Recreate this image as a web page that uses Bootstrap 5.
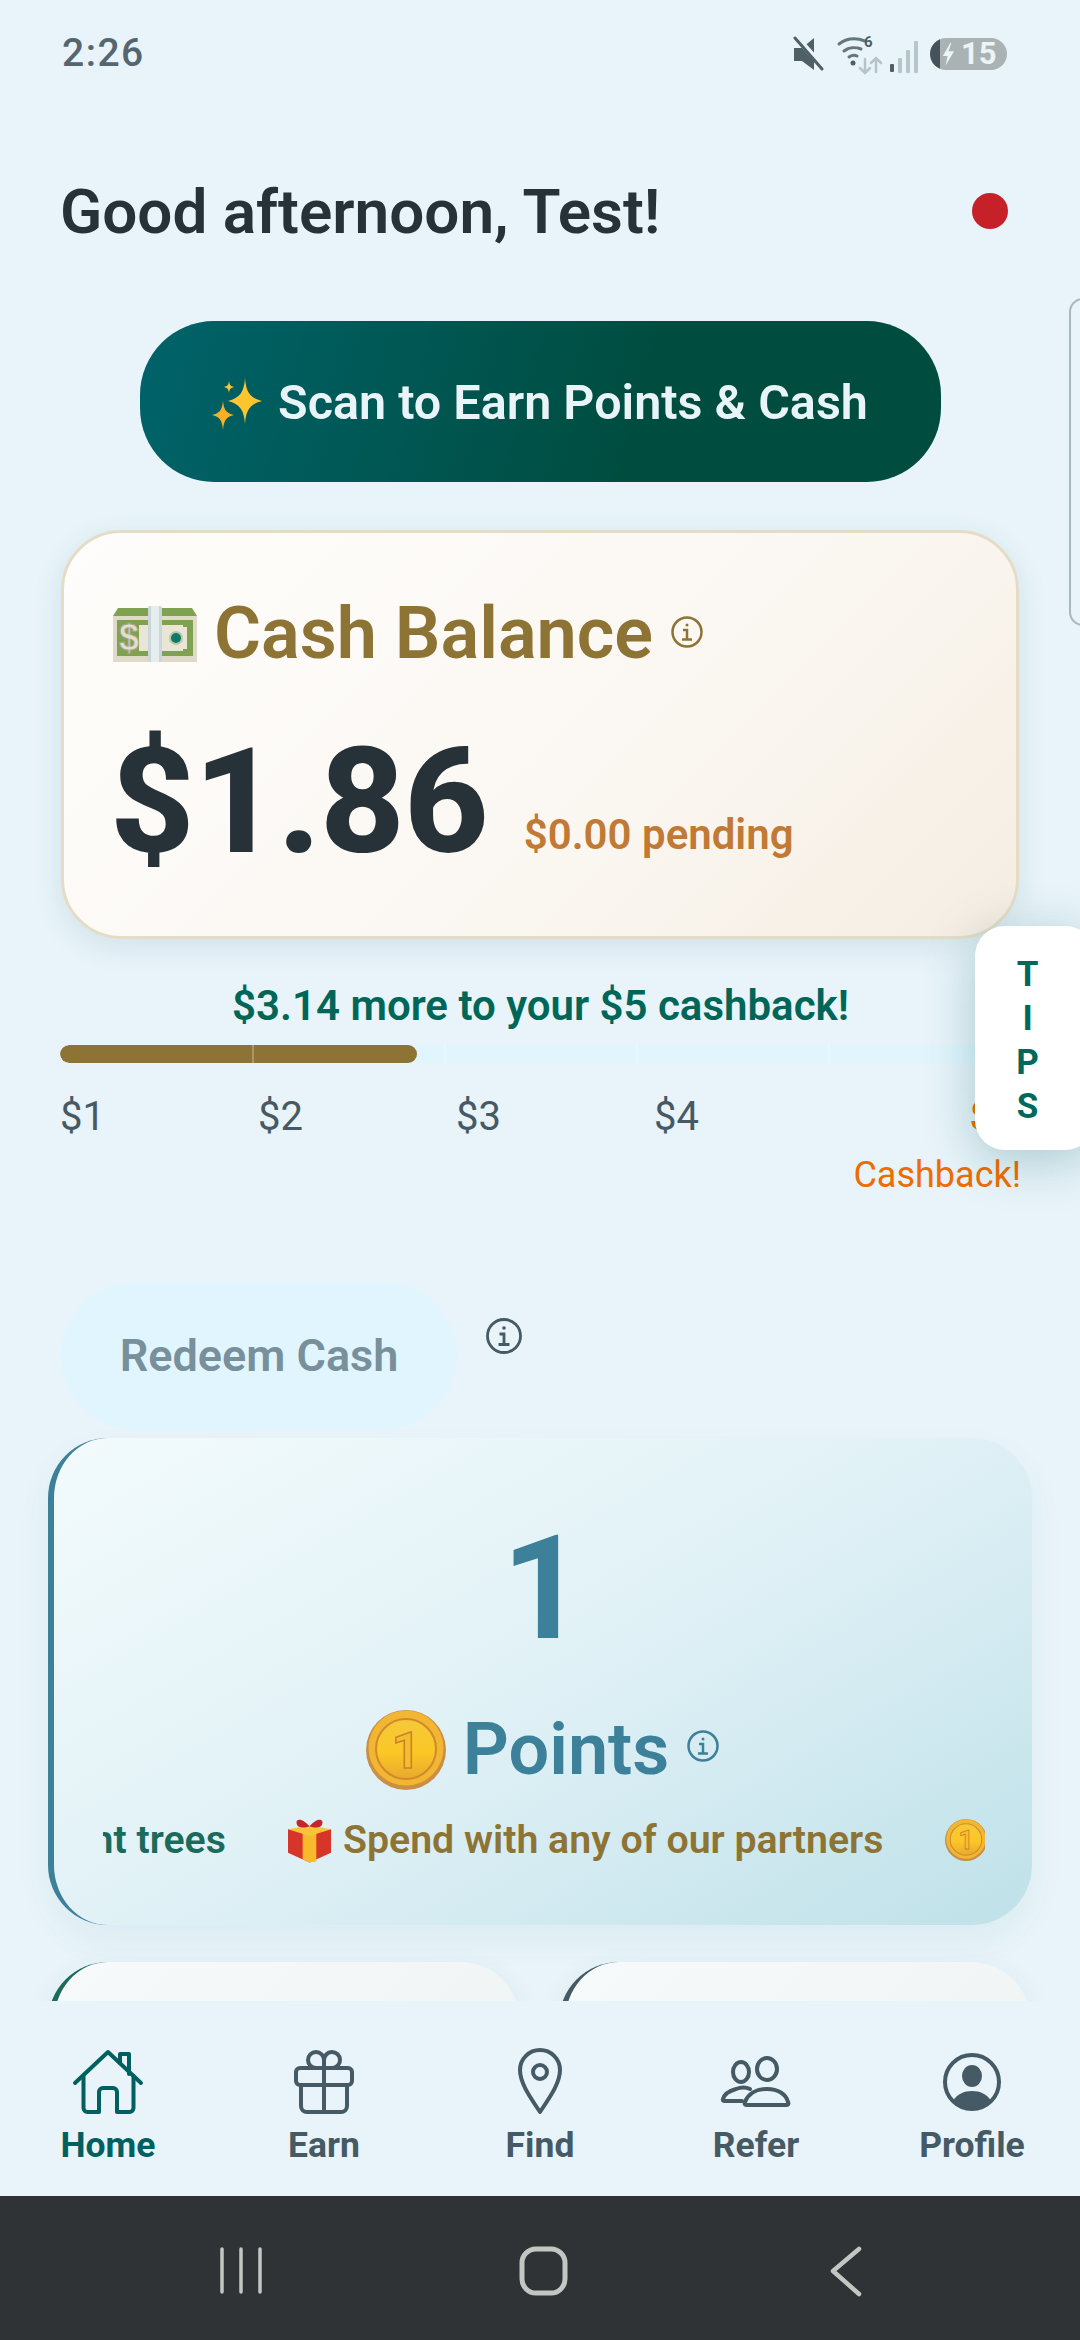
<!DOCTYPE html>
<html lang="en">

<head>
  <meta charset="UTF-8" />
  <title>Home</title>
  <meta name="viewport" content="width=device-width, initial-scale=1" />
  <link href="https://cdn.jsdelivr.net/npm/bootstrap@5.3.0/dist/css/bootstrap.min.css" rel="stylesheet" />
  <style>
    html, body { height: 100%; }

    body {
      background-color: #e8f4f9;
      font-family: Roboto, "Liberation Sans", sans-serif;
      overflow: hidden;
    }

    .app-shell { height: 2340px; width: 1080px; }

    /* status bar */
    .status-row { height: 104px; padding: 3px 73px 0 62px; flex: none; }
    .status-time { font-size: 39px; font-weight: 500; color: #546670; letter-spacing: 1.5px; line-height: 1; }
    .batt-pill {
      width: 77px; height: 32px; border-radius: 16px; color: #eef4f5; padding-left: 10px;
      background: linear-gradient(90deg, #46525a 10px, #a9b3b4 10px);
      font-size: 31px; font-weight: 700; line-height: 32px;
    }

    /* main scroll area */
    .main-area { flex: 1 1 0; min-height: 0; overflow: hidden; }
    .hello-row { margin: 73px 72px 0 60px; height: 70px; }
    .hello-text { font-size: 62px; font-weight: 600; color: #263238; line-height: 70px; margin: 0; }
    .red-dot { width: 36px; height: 36px; background: #c62128; margin-top: -3px; }

    .scan-btn {
      width: 801px; height: 161px; margin: 74px auto 0; border: 0; border-radius: 74px;
      background: linear-gradient(105deg, #00636a 0%, #004d40 62%);
      color: #e8f4f8; font-size: 48.5px; font-weight: 600; gap: 16px; padding-top: 10px;
    }
    .scan-btn:hover { background: linear-gradient(105deg, #00636a 0%, #004d40 62%); color: #e8f4f8; }

    .peek-card {
      position: absolute; left: 1069px; top: 298px; width: 40px; height: 328px;
      border: 2px solid #a9b8bd; border-radius: 14px;
    }

    .cash-card {
      width: 958px; height: 409px; margin: 48px 0 0 61px; border: 3px solid #e5dcc8; border-radius: 60px;
      background: linear-gradient(135deg, #fffdfb 0%, #fbf8f3 55%, #f5ede2 100%);
      box-shadow: 0 8px 30px rgba(0, 80, 100, .10);
      padding: 71px 0 0 49px;
    }
    .cash-title { font-size: 72px; font-weight: 600; color: #8d7435; line-height: 60px; gap: 17px; }
    .cash-amount { font-size: 147px; font-weight: 800; color: #263238; line-height: 150px; letter-spacing: -1px; margin-left: -3px; }
    .cash-pending { font-size: 42px; font-weight: 600; color: #c17a35; line-height: 48px; margin: 0 0 18px 36px; }
    .cash-figures { margin-top: 63px; }

    .goal-text { font-size: 42px; font-weight: 600; color: #006657; line-height: 48px; margin: 43px 0 0; padding-left: 1px; }
    .goal-track {
      width: 960px; height: 18px; margin: 15px 0 0 60px; background: #e1f5fe; border-radius: 9px;
      position: relative; --bs-progress-bar-bg: #8d7435;
    }
    .goal-track .progress-bar { border-radius: 9px; }
    .goal-tick { width: 2px; background: rgba(255, 255, 255, .25); position: absolute; top: 0; bottom: 0; }
    .goal-labels { margin: 30px 0 0 60px; width: 961px; font-size: 40px; color: #455a64; line-height: 48px; }
    .goal-step { width: 198px; }
    .goal-last { flex: 1 1 0; color: #ef6c00; }
    .goal-five { padding-right: 6px; font-weight: 500; }
    .goal-note { font-size: 36px; line-height: 40px; margin-top: 14px; }

    .tips-tab {
      position: absolute; left: 975px; top: 926px; width: 120px; height: 224px;
      background: #fff; border-radius: 30px; color: #00695c; font-size: 35px; font-weight: 700;
      line-height: 44px; padding: 27px 15px 0 0; box-shadow: 0 10px 50px rgba(0, 90, 100, .28);
    }

    .redeem-row { margin: 87px 0 0 61px; }
    .redeem-pill {
      width: 396px; height: 148px; border: 0; border-radius: 74px; background: #e1f5fe;
      color: #78909c; font-size: 45px; font-weight: 600;
    }
    .redeem-pill:disabled { background: #e1f5fe; color: #78909c; opacity: 1; }
    .redeem-info { margin: 35px 0 0 28px; }

    .points-card {
      width: 984px; height: 487px; margin: 8px 0 0 48px; border: 0; border-left: 6px solid #3d8099; border-radius: 60px;
      background: linear-gradient(150deg, #f3fbfc 0%, #e0f1f6 50%, #bfe1e9 100%);
      box-shadow: 0 16px 36px rgba(0, 90, 110, .05); padding-top: 76px;
    }
    .points-num { font-size: 144px; font-weight: 700; color: #3d8099; line-height: 150px; }
    .points-title { font-size: 72px; font-weight: 600; color: #3d8099; height: 90px; margin-top: 41px; gap: 17px; line-height: 90px; }

    .promo-clip { width: 882px; height: 50px; margin: 20px 0 0 49px; overflow: hidden; }
    .promo-strip { margin-left: -68px; gap: 62px; font-size: 39.3px; font-weight: 600; line-height: 50px; white-space: nowrap; }
    .promo-green { color: #1a6b5c; }
    .promo-gold { color: #8d7435; gap: 12px; }

    .mini-row { margin: 37px 0 0 48px; gap: 39px; }
    .mini-card {
      width: 472px; height: 200px; border: 0; border-radius: 60px;
      background: linear-gradient(135deg, #f7fafa, #eef3f3);
      box-shadow: 0 8px 30px rgba(0, 90, 110, .07);
    }
    .mini-green { border-left: 6px solid #1a6b5c; }
    .mini-slate { border-left: 6px solid #455a64; }

    /* bottom tabs */
    .tab-bar { height: 195px; background: #e8f4f9; flex: none; padding-top: 44px; position: relative; }
    .tab-item { width: 216px; color: #455a64; font-size: 35.5px; font-weight: 700; line-height: 40px; text-decoration: none; }
    .tab-item svg { display: block; }
    .tab-active { color: #00605f; }

    .android-bar { height: 144px; background: #2f3336; flex: none; }
  </style>
</head>

<body>
  <div class="app-shell d-flex flex-column position-relative">

    <div class="status-row d-flex align-items-center justify-content-between">
      <span class="status-time">2:26</span>
      <div class="d-flex align-items-center">
        <svg width="137" height="50" viewBox="0 0 137 50" fill="none">
          <!-- mute -->
          <path d="M1 19h8l12-10v32l-12-9H1z" fill="#4f5f66" />
          <path d="M3 8l27 30" stroke="#e8f4f9" stroke-width="6" />
          <path d="M2 9l27 31" stroke="#4f5f66" stroke-width="3" stroke-linecap="round" />
          <!-- wifi -->
          <path d="M46 15c8-6 18-6 26-3M51 22c5-4 12-4 17-2M56 28c3-2 6-2 8-1" stroke="#66767d" stroke-width="3" stroke-linecap="round" />
          <circle cx="60" cy="34" r="2.500" fill="#4f5f66" />
          <text x="71" y="18" font-family="Roboto, sans-serif" font-size="15" font-weight="700" fill="#4f5f66">6</text>
          <path d="M72 30v14M67 39l5 5 5-5" stroke="#b5c4c8" stroke-width="2.500" stroke-linecap="round" />
          <path d="M83 43V29M78 34l5-5 5 5" stroke="#b5c4c8" stroke-width="2.500" stroke-linecap="round" />
          <!-- signal -->
          <rect x="97" y="35" width="4" height="8" rx="1" fill="#4f5f66" />
          <rect x="105" y="29" width="4" height="15" rx="1" fill="#b5c6c8" />
          <rect x="113" y="21" width="4" height="23" rx="1" fill="#b5c6c8" />
          <rect x="121" y="12" width="4" height="32" rx="1" fill="#b5c6c8" />
        </svg>
        <div class="batt-pill d-flex align-items-center">
          <svg width="17" height="32" viewBox="0 0 18 32" class="flex-shrink-0"><path d="M11 4L3 18h5l-2 10 9-15h-6l3-9z" fill="#eef4f5" /></svg>
          <span class="ms-1">15</span>
        </div>
      </div>
    </div>

    <main class="main-area">
      <div class="hello-row d-flex align-items-center justify-content-between">
        <h1 class="hello-text">Good afternoon, Test!</h1>
        <span class="red-dot rounded-circle"></span>
      </div>

      <button class="btn scan-btn d-flex align-items-center justify-content-center" type="button">
        <svg width="50" height="52" viewBox="0 0 50 52" class="flex-shrink-0">
          <path d="M33 0c1 14 5 20 17 23-12 3-16 9-17 23-1-14-5-20-17-23 12-3 16-9 17-23z" fill="#fdc62f" />
          <path d="M11 23c1 9 3 12 11 14-8 2-10 5-11 15-1-10-3-13-11-15 8-2 10-5 11-14z" fill="#fbb024" />
          <path d="M17 3c.5 4 1.500 5 5 6-3.500 1-4.500 2-5 6-.5-4-1.500-5-5-6 3.500-1 4.500-2 5-6z" fill="#fdc62f" />
        </svg>
        <span>Scan to Earn Points &amp; Cash</span>
      </button>

      <div class="peek-card"></div>

      <div class="card cash-card">
        <div class="cash-title d-flex align-items-center">
          <svg width="84" height="56" viewBox="0 0 84 56" class="flex-shrink-0">
            <path d="M5 2h74l5 8H0z" fill="#7ea24f" />
            <rect x="0" y="10" width="84" height="46" fill="#e0dac8" />
            <rect x="4" y="14" width="76" height="36" fill="#7ea24f" />
            <path d="M26 19h44v2h4v22h-4v2H26z" fill="#e9e6d7" />
            <text x="6" y="44" font-family="Liberation Sans, sans-serif" font-size="36" font-weight="700" fill="#e3dfcc" stroke="#a8a48f" stroke-width="1">$</text>
            <circle cx="63" cy="32" r="6" fill="#0f7a6a" stroke="#b9c9a8" stroke-width="2" />
            <rect x="35" y="0" width="14" height="56" rx="2" fill="#c9d7da" />
            <rect x="38" y="0" width="8" height="56" fill="#e6edee" />
          </svg>
          <span>Cash Balance</span>
          <svg width="34" height="34" viewBox="0 0 34 34" class="mb-1 flex-shrink-0" fill="none" stroke="#8d7435" stroke-width="2.500">
            <circle cx="17" cy="17" r="14.500" />
            <circle cx="17" cy="10" r="1.500" fill="#8d7435" stroke="none" />
            <path d="M13 15h4v9M12 24.500h10" />
          </svg>
        </div>
        <div class="cash-figures d-flex align-items-end">
          <span class="cash-amount">$1.86</span>
          <span class="cash-pending">$0.00 pending</span>
        </div>
      </div>

      <p class="goal-text text-center">$3.14 more to your $5 cashback!</p>

      <div class="progress goal-track">
        <div class="progress-bar" role="progressbar" style="width: 37.2%"></div>
        <span class="goal-tick" style="left: 20%"></span>
        <span class="goal-tick" style="left: 40%"></span>
        <span class="goal-tick" style="left: 60%"></span>
        <span class="goal-tick" style="left: 80%"></span>
      </div>

      <div class="goal-labels d-flex">
        <span class="goal-step">$1</span>
        <span class="goal-step">$2</span>
        <span class="goal-step">$3</span>
        <span class="goal-step">$4</span>
        <div class="goal-last text-end">
          <div class="goal-five">$5</div>
          <div class="goal-note text-nowrap">Cashback!</div>
        </div>
      </div>

      <div class="tips-tab d-flex flex-column align-items-center">
        <span>T</span><span>I</span><span>P</span><span>S</span>
      </div>

      <div class="redeem-row d-flex align-items-start">
        <button class="btn redeem-pill" type="button" disabled>Redeem Cash</button>
        <svg class="redeem-info" width="38" height="38" viewBox="0 0 38 38" fill="none" stroke="#455a64" stroke-width="2.800">
          <circle cx="19" cy="19" r="16.500" />
          <circle cx="19" cy="11" r="1.800" fill="#455a64" stroke="none" />
          <path d="M14.500 17h4.500v10M13.500 27.500h11" />
        </svg>
      </div>

      <div class="card points-card">
        <div class="points-num text-center">1</div>
        <div class="points-title d-flex align-items-center justify-content-center">
          <svg width="80" height="80" viewBox="0 0 80 80" class="flex-shrink-0">
            <defs>
              <linearGradient id="coinFace" x1="0" y1="0" x2="0" y2="1">
                <stop offset="0" stop-color="#f6c93a" />
                <stop offset=".55" stop-color="#fbc726" />
                <stop offset="1" stop-color="#e9a92e" />
              </linearGradient>
            </defs>
            <circle cx="40" cy="40" r="40" fill="#c98f45" />
            <circle cx="40" cy="38" r="37.500" fill="#f2b632" />
            <circle cx="40" cy="39" r="30" fill="url(#coinFace)" stroke="#d08a2d" stroke-width="2" />
            <text x="40" y="58" text-anchor="middle" font-family="Roboto, sans-serif" font-size="50" font-weight="700" fill="#f4bd2e" stroke="#c8812a" stroke-width="1.500">1</text>
          </svg>
          <span>Points</span>
          <svg width="34" height="34" viewBox="0 0 34 34" class="mb-2 flex-shrink-0" fill="none" stroke="#3d8099" stroke-width="2.500">
            <circle cx="17" cy="17" r="14.500" />
            <circle cx="17" cy="10" r="1.500" fill="#3d8099" stroke="none" />
            <path d="M13 15h4v9M12 24.500h10" />
          </svg>
        </div>
        <div class="promo-clip">
          <div class="promo-strip d-flex align-items-center">
            <span class="promo-green">Plant trees</span>
            <span class="promo-gold d-flex align-items-center">
              <svg width="43" height="46" viewBox="0 0 44 46" class="flex-shrink-0">
                <path d="M0 12h44v24L22 46 0 36z" fill="#d8352a" />
                <path d="M15 12h14v33l-7 1-7-3z" fill="#f9b92d" />
                <path d="M0 12l22-4 22 4-22 7z" fill="#f9c43c" />
                <path d="M22 9C14 0 7 1 9 7c1 4 8 4 13 2zm0 0C30 0 37 1 35 7c-1 4-8 4-13 2z" fill="#c4272b" />
              </svg>
              <span>Spend with any of our partners</span>
            </span>
            <svg width="42" height="42" viewBox="0 0 80 80" class="flex-shrink-0">
              <circle cx="40" cy="40" r="40" fill="#c98f45" />
              <circle cx="40" cy="38" r="37.500" fill="#f2b632" />
              <circle cx="40" cy="39" r="30" fill="url(#coinFace)" stroke="#d08a2d" stroke-width="2" />
              <text x="40" y="58" text-anchor="middle" font-family="Roboto, sans-serif" font-size="50" font-weight="700" fill="#f4bd2e" stroke="#c8812a" stroke-width="1.500">1</text>
            </svg>
          </div>
        </div>
      </div>

      <div class="mini-row d-flex">
        <div class="card mini-card mini-green"></div>
        <div class="card mini-card mini-slate"></div>
      </div>
    </main>

    <nav class="tab-bar d-flex">
      <a class="tab-item tab-active d-flex flex-column align-items-center" href="#">
        <svg width="80" height="80" viewBox="0 0 80 80" fill="none" stroke="#00605f" stroke-width="4" stroke-linecap="round" stroke-linejoin="round">
          <path d="M7 38L40 7l33 31" />
          <path d="M52 18V9h9v20" />
          <path d="M15.500 31v32a4 4 0 0 0 4 4H31V47a4 4 0 0 1 4-4h10a4 4 0 0 1 4 4v20h12.500a4 4 0 0 0 4-4V31" />
        </svg>
        <span>Home</span>
      </a>
      <a class="tab-item d-flex flex-column align-items-center" href="#">
        <svg width="80" height="80" viewBox="0 0 80 80" fill="none" stroke="#455a64" stroke-width="4" stroke-linecap="round" stroke-linejoin="round">
          <rect x="12" y="23" width="56" height="17" rx="4" />
          <path d="M17 40v21a6 6 0 0 0 6 6h34a6 6 0 0 0 6-6V40" />
          <path d="M40 23v44" />
          <path d="M40 23h-8a8 8 0 1 1 8-8zM40 23h9a8 8 0 1 0-9-8z" />
        </svg>
        <span>Earn</span>
      </a>
      <a class="tab-item d-flex flex-column align-items-center" href="#">
        <svg width="80" height="80" viewBox="0 0 80 80" fill="none" stroke="#455a64" stroke-width="4" stroke-linecap="round" stroke-linejoin="round">
          <path d="M40 67C30 52 20 38 20 25a20 20 0 0 1 40 0c0 13-10 27-20 42z" />
          <circle cx="40" cy="27" r="7" />
        </svg>
        <span>Find</span>
      </a>
      <a class="tab-item d-flex flex-column align-items-center" href="#">
        <svg width="80" height="80" viewBox="0 0 80 80" fill="none" stroke="#455a64" stroke-width="4" stroke-linecap="round" stroke-linejoin="round">
          <ellipse cx="25" cy="27" rx="8" ry="10" />
          <ellipse cx="51" cy="24" rx="10" ry="11" />
          <path d="M34 44c-4-2-9-2-14 0-7 2-12 6-13 10-1 2 2 2 3 2h16" />
          <path d="M31 60c-2 0-3-1-2-3 3-8 11-13 22-13s19 5 21 13c1 2 0 3-2 3z" />
        </svg>
        <span>Refer</span>
      </a>
      <a class="tab-item d-flex flex-column align-items-center" href="#">
        <svg width="80" height="80" viewBox="0 0 80 80" fill="none">
          <circle cx="40" cy="37" r="27" stroke="#455a64" stroke-width="4" />
          <ellipse cx="40" cy="31" rx="10" ry="11" fill="#455a64" />
          <path d="M21 56c4-7 11-10 19-10s15 3 19 10a27 27 0 0 1-38 0z" fill="#455a64" />
        </svg>
        <span>Profile</span>
      </a>
    </nav>

    <div class="android-bar d-flex align-items-center">
      <svg width="1080" height="144" viewBox="0 0 1080 144" fill="none" stroke="#c3c7c2" stroke-linecap="round" stroke-linejoin="round">
        <path d="M222 53v43M241 53v43M260 53v43" stroke-width="3.500" />
        <rect x="522" y="53" width="43" height="44" rx="14" stroke-width="5" />
        <path d="M859 53l-26 22M833 75l26 23" stroke-width="4.500" />
      </svg>
    </div>
  </div>

  <script src="https://cdn.jsdelivr.net/npm/bootstrap@5.3.0/dist/js/bootstrap.bundle.min.js"></script>
</body>

</html>
